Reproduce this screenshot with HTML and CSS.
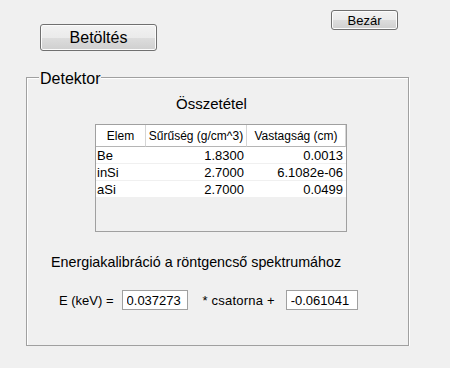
FILE: index.html
```html
<!DOCTYPE html>
<html>
<head>
    <title>Detektor</title>
    <link rel="stylesheet" href="styles.css">
</head>
<body>
    <div class="toolbar">
        <button class="btn btn-load">Betöltés</button>
        <button class="btn btn-close">Bezár</button>
    </div>
    <fieldset class="panel">
        <legend>Detektor</legend>
        <div class="title">Összetétel</div>
        <div class="grid">
            <table>
                <thead>
                    <tr>
                        <th class="col-elem">Elem</th>
                        <th class="col-dens">Sűrűség (g/cm^3)</th>
                        <th class="col-thick">Vastagság (cm)</th>
                    </tr>
                </thead>
                <tbody>
                    <tr><td>Be</td><td class="num">1.8300</td><td class="num">0.0013</td></tr>
                    <tr><td>inSi</td><td class="num">2.7000</td><td class="num">6.1082e-06</td></tr>
                    <tr><td>aSi</td><td class="num">2.7000</td><td class="num">0.0499</td></tr>
                </tbody>
            </table>
        </div>
        <div class="calib-title">Energiakalibráció a röntgencső spektrumához</div>
        <div class="calib-row">
            <span>E (keV) =</span>
            <input class="field field-a" type="text" value="0.037273">
            <span class="mult">* csatorna +</span>
            <input class="field field-b" type="text" value="-0.061041">
        </div>
    </fieldset>
</body>
</html>
```

FILE: styles.css
```css
body {
    margin: 0;
    background-color: #f0f0f0;
    font-family: "Liberation Sans", Arial, sans-serif;
    color: #000;
}
.toolbar {
    display: flex;
    align-items: flex-start;
    padding-left: 40px;
    height: 51px;
}
.btn {
    font-family: "Liberation Sans", Arial, sans-serif;
    color: #000;
    border: 1px solid #707070;
    border-radius: 3px;
    background: linear-gradient(#f2f2f2 0%, #ebebeb 50%, #dddddd 51%, #cfcfcf 100%);
    box-shadow: inset 0 0 0 1px #fcfcfc;
    padding: 0;
    box-sizing: border-box;
}
.btn-load {
    margin-top: 24px;
    width: 117px;
    height: 27px;
    font-size: 16px;
}
.btn-close {
    margin-top: 10px;
    margin-left: 174px;
    width: 67px;
    height: 20px;
    font-size: 13px;
}
.panel {
    margin: 15px 0 0 26px;
    width: 383px;
    box-sizing: border-box;
    padding: 0 0 35px 12px;
    border: 1px solid #a0a0a0;
    box-shadow: inset 1px 1px 0 #fff, 1px 1px 0 #fff;
}
.panel legend {
    padding: 4px 1px 0;
    line-height: 18px;
    font-size: 16px;
    background-color: #f0f0f0;
}
.title {
    margin: 7px 0 0 137px;
    font-size: 15px;
    line-height: 17px;
}
.grid {
    margin: 12px 0 0 56px;
    width: 252px;
    height: 108px;
    box-sizing: border-box;
    border: 1px solid #a0a0a0;
    background-color: #f0f0f0;
}
.grid table {
    width: 250px;
    border-spacing: 0;
    table-layout: fixed;
}
.grid th {
    height: 21px;
    padding: 0;
    font-weight: normal;
    font-size: 12px;
    background-color: #fff;
    border-right: 1px solid #d5d5d5;
    border-bottom: 1px solid #b5b5b5;
    text-align: center;
}
.col-elem { width: 49px; }
.col-dens { width: 100px; }
.grid td {
    height: 16px;
    padding: 0 3px 0 1px;
    font-size: 13px;
    background-color: #fff;
    border-bottom: 1px solid #f0f0f0;
    white-space: nowrap;
}
.grid td.num {
    text-align: right;
}
.calib-title {
    margin: 22px 0 0 12px;
    font-size: 14.3px;
    line-height: 17px;
}
.calib-row {
    display: flex;
    align-items: center;
    margin: 19px 0 0 20px;
    font-size: 13px;
}
.field {
    height: 20px;
    box-sizing: border-box;
    border: 1px solid #a0a0a0;
    background-color: #fff;
    font-family: "Liberation Sans", Arial, sans-serif;
    font-size: 13px;
    padding: 1px 0 0 4px;
    color: #000;
}
.field-a {
    width: 66px;
    margin-left: 8px;
}
.mult {
    margin-left: 15px;
    letter-spacing: 0.2px;
}
.field-b {
    width: 72px;
    margin-left: 11px;
}
```
